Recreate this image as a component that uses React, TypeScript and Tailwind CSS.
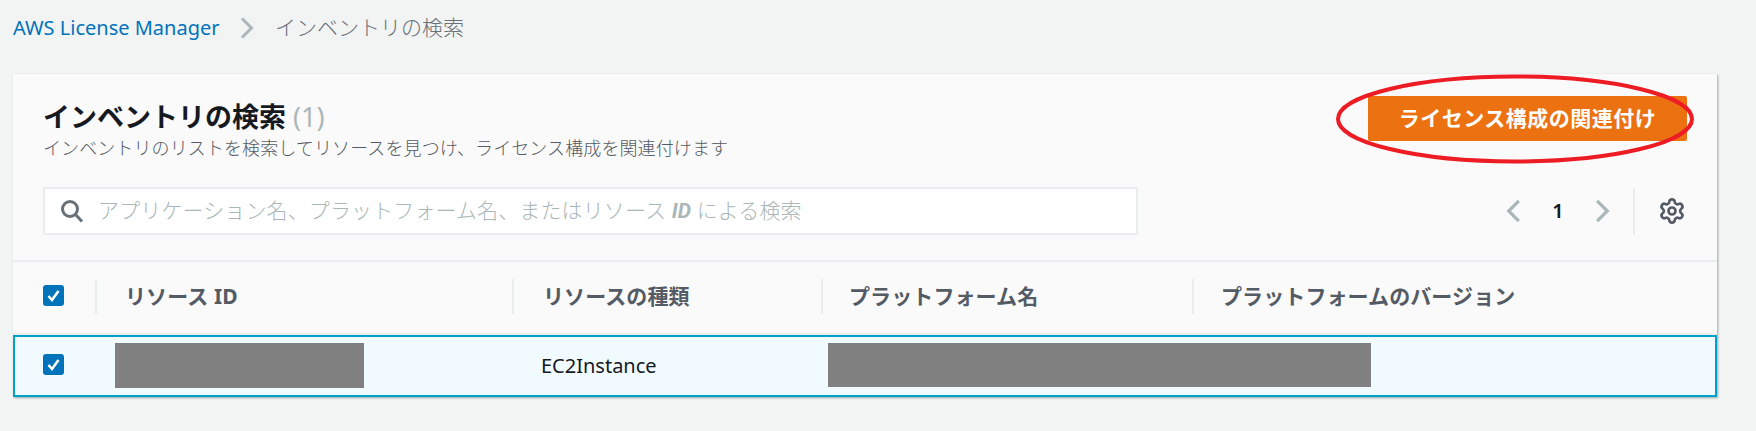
import React from "react";
import { Settings } from "lucide-react";

const font = { fontFamily: '"Noto Sans", "Noto Sans CJK JP", sans-serif' };

function Check() {
  return (
    <span className="flex h-[21px] w-[21px] -translate-y-[2px] items-center justify-center rounded-[3px] bg-[#0073bb]">
      <svg width="15" height="15" viewBox="0 0 15 15" fill="none">
        <path d="M2.5 8 L6 12 L12.5 3" stroke="#fff" strokeWidth="2.6" />
      </svg>
    </span>
  );
}

function Chevron({ left, className, big }: { left?: boolean; className?: string; big?: boolean }) {
  return (
    <svg width={big ? 15 : 14} height={big ? 24 : 22} viewBox="0 0 14 22" fill="none" className={className}>
      <path d={left ? "M12 1.5 L2.5 11 L12 20.5" : "M2 1.5 L11.5 11 L2 20.5"} stroke="#aab7b8" strokeWidth="3" />
    </svg>
  );
}

function HeaderCell({ label, className }: { label: string; className: string }) {
  return (
    <div className={`flex h-[35px] -translate-y-[1px] items-center border-l-2 border-[#eaeded] ${className}`}>
      <span className="text-[21px] font-bold leading-none tracking-[0.1px] text-[#545b64]">{label}</span>
    </div>
  );
}

export default function App() {
  return (
    <div className="relative h-[431px] w-[1756px] overflow-hidden bg-[#f2f3f3]" style={font}>
      <nav className="flex h-[55px] items-center pl-[13px] text-[21px] font-light">
        <span className="w-[228px] text-[20px] font-normal text-[#0073bb]">AWS License Manager</span>
        <Chevron className="-ml-[1px]" />
        <span className="ml-[21px] text-[#687078]">インベントリの検索</span>
      </nav>

      <section className="ml-[13px] mt-[19px] w-[1704px] bg-[#fafafa] shadow-[1px_1px_2px_rgba(0,28,36,0.35)]">
        <div className="flex justify-between pl-[30px] pr-[30px] pt-[22px]">
          <div className="h-[45px] pt-[3px]">
            <h1 className="flex items-baseline text-[27px] font-bold leading-[36px] text-[#16191f]">
              インベントリの検索
              <span className="ml-[7px] font-normal text-[#aab7b8]">(1)</span>
            </h1>
            <p className="mt-[1px] text-[18px] font-light leading-[24px] tracking-[0.1px] text-[#545b64]">
              インベントリのリストを検索してリソースを見つけ、ライセンス構成を関連付けます
            </p>
          </div>
          <button className="flex h-[45px] w-[319px] items-center justify-center rounded-[2px] bg-[#ec7211] text-[21px] font-bold tracking-[0.5px] text-white">
            ライセンス構成の関連付け
          </button>
        </div>

        <div className="mt-[46px] flex h-[48px] items-center pl-[30px] pr-[31px]">
          <div className="flex h-[48px] w-[1095px] items-center border-2 border-[#eaeded] bg-white pl-[15px]">
            <svg width="24" height="24" viewBox="0 0 24 24" fill="none">
              <circle cx="10" cy="10" r="7.5" stroke="#687078" strokeWidth="3" />
              <path d="M15.5 15.5 L22 22.5" stroke="#687078" strokeWidth="3" />
            </svg>
            <span className="ml-[14px] text-[21px] font-light tracking-[0.12px] text-[#aab7b8]">
              アプリケーション名、プラットフォーム名、またはリソース <i className="font-['Roboto'] font-bold">ID</i> による検索
            </span>
          </div>
          <div className="ml-auto flex h-[47px] items-center">
            <Chevron left big />
            <span className="ml-[29px] w-[16px] text-center text-[20px] font-semibold text-[#16191f]">1</span>
            <Chevron big className="ml-[29px]" />
            <div className="ml-[23px] h-[47px] border-l-2 border-[#eaeded]" />
            <Settings className="ml-[23px] text-[#545b64]" size={28} strokeWidth={2.3} />
          </div>
        </div>

        <div className="mt-[25px] grid h-[75px] grid-cols-[82px_417px_309px_371px_1fr] items-center border-y-2 border-[#eaeded] bg-[#fafafa]">
          <div className="flex justify-center pr-[1px]"><Check /></div>
          <HeaderCell label="リソース ID" className="pl-[28px]" />
          <HeaderCell label="リソースの種類" className="pl-[29px]" />
          <HeaderCell label="プラットフォーム名" className="pl-[26px]" />
          <HeaderCell label="プラットフォームのバージョン" className="pl-[27px]" />
        </div>

        <div className="grid h-[62px] grid-cols-[82px_427px_304px_1fr] items-center border-2 border-[#00a1c9] bg-[#f1faff]">
          <div className="flex justify-center pr-[5px]"><Check /></div>
          <div className="ml-[18px] mt-[6px] h-[45px] w-[249px] self-start bg-[#808080]" />
          <div className="pl-[17px] text-[20px] text-[#16191f]">EC2Instance</div>
          <div className="mt-[6px] h-[44px] w-[543px] self-start bg-[#808080]" />
        </div>
      </section>

      <svg className="pointer-events-none absolute left-[1334px] top-[73px]" width="362" height="92" viewBox="0 0 362 92" fill="none">
        <ellipse cx="181" cy="46" rx="177" ry="42.5" stroke="#ed1c24" strokeWidth="4" />
      </svg>
    </div>
  );
}
